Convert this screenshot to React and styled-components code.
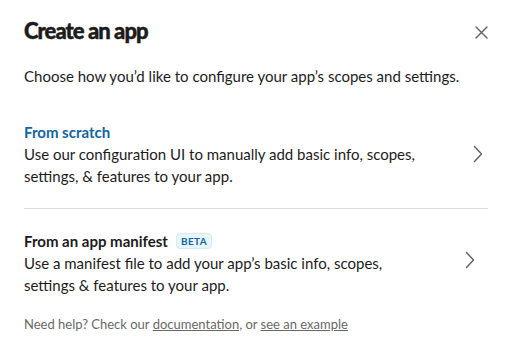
import React from 'react';
import styled, { createGlobalStyle } from 'styled-components';

const Global = createGlobalStyle`
  body {
    margin: 0;
    background: #fff;
    font-family: Lato, "Noto Sans", sans-serif;
    color: #1d1c1d;
  }
`;

const Modal = styled.div`
  width: 512px;
  height: 363px;
  box-sizing: border-box;
  padding: 0 24px;
  display: flex;
  flex-direction: column;
`;

const Header = styled.div`
  display: flex;
  align-items: center;
  justify-content: space-between;
  height: 60px;
`;

const Title = styled.h1`
  margin: 0;
  font-size: 22px;
  font-weight: 900;
  letter-spacing: -0.95px;
  -webkit-text-stroke: 0.45px #1d1c1d;
  color: #1d1c1d;
`;

const CloseButton = styled.button`
  border: 0;
  background: none;
  padding: 0;
  width: 20px;
  height: 20px;
  display: flex;
  align-items: center;
  justify-content: center;
  margin: 4px -3px 0 0;
  color: #616061;
`;

const Intro = styled.p`
  margin: 0;
  font-size: 15px;
  line-height: 22px;
  padding-top: 5px;
`;

const Options = styled.div`
  margin-top: 22px;
  display: flex;
  flex-direction: column;
`;

const Option = styled.div`
  display: flex;
  align-items: center;
  justify-content: space-between;
  padding: ${p => (p.$first ? '12px 0 21px' : '21px 0 9px')};
  border-bottom: ${p => (p.$first ? '1px solid #dddddd' : 'none')};
`;

const OptionText = styled.div`
  display: flex;
  flex-direction: column;
  max-width: ${p => (p.$narrow ? '400px' : '430px')};
`;

const OptionTitle = styled.div`
  display: flex;
  align-items: center;
  gap: 8px;
  font-size: 15px;
  line-height: 22px;
  font-weight: 700;
  color: ${p => (p.$link ? '#1264a3' : '#1d1c1d')};
`;

const Badge = styled.span`
  font-size: 10px;
  line-height: 14px;
  font-weight: 700;
  letter-spacing: 0.4px;
  color: #1264a3;
  background: #e8f5fa;
  border: 1px solid #d6ebf7;
  border-radius: 4px;
  padding: 0 4px;
`;

const OptionBody = styled.div`
  font-size: 15px;
  line-height: 22px;
  color: #1d1c1d;
`;

const Chevron = styled.span`
  display: flex;
  color: #616061;
  margin: ${p => p.$lift}px ${p => p.$inset}px 0 0;
`;

const Footer = styled.p`
  margin: 10px 0 0;
  font-size: 13px;
  line-height: 18px;
  color: #696869;

  a {
    color: #696869;
    text-decoration: underline;
  }
`;

const CloseIcon = () => (
  <svg width="13" height="13" viewBox="0 0 13 13">
    <path d="M1 1 L12 12 M12 1 L1 12" stroke="currentColor" strokeWidth="1.4" strokeLinecap="round" />
  </svg>
);

const ChevronIcon = () => (
  <svg width="10" height="18" viewBox="0 0 10 18">
    <path d="M1.5 1.5 L8.5 9 L1.5 16.5" fill="none" stroke="currentColor" strokeWidth="1.4" strokeLinecap="round" strokeLinejoin="round" />
  </svg>
);

const options = [
  {
    title: 'From scratch',
    link: true,
    body: 'Use our configuration UI to manually add basic info, scopes, settings, & features to your app.',
    inset: 5,
    lift: 0,
  },
  {
    title: 'From an app manifest',
    badge: 'BETA',
    body: 'Use a manifest file to add your app’s basic info, scopes, settings & features to your app.',
    inset: 13,
    lift: -6,
    narrow: true,
  },
];

export default function App() {
  return (
    <>
      <Global />
      <Modal>
        <Header>
          <Title>Create an app</Title>
          <CloseButton aria-label="Close"><CloseIcon /></CloseButton>
        </Header>
        <Intro>Choose how you’d like to configure your app’s scopes and settings.</Intro>
        <Options>
          {options.map((o, i) => (
            <Option key={o.title} $first={i === 0}>
              <OptionText $narrow={o.narrow}>
                <OptionTitle $link={o.link}>
                  {o.title}
                  {o.badge && <Badge>{o.badge}</Badge>}
                </OptionTitle>
                <OptionBody>{o.body}</OptionBody>
              </OptionText>
              <Chevron $inset={o.inset} $lift={o.lift}><ChevronIcon /></Chevron>
            </Option>
          ))}
        </Options>
        <Footer>
          Need help? Check our <a href="#">documentation</a>, or <a href="#">see an example</a>
        </Footer>
      </Modal>
    </>
  );
}
